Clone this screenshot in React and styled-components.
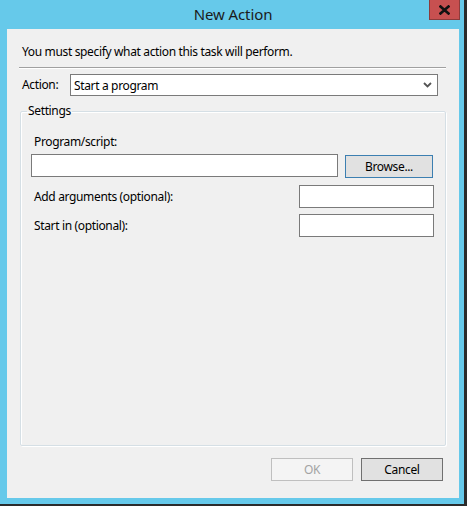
import React from 'react';
import styled, { createGlobalStyle } from 'styled-components';

const GlobalStyle = createGlobalStyle`
  html, body {
    margin: 0;
    padding: 0;
    background: #ffffff;
  }
  body {
    font-family: "Noto Sans", "Liberation Sans", sans-serif;
    font-size: 12px;
    letter-spacing: -0.35px;
    color: #000000;
  }
  * { box-sizing: border-box; }
`;

export default function App() {
  return (
    <>
      <GlobalStyle />
      <Frame>
        <TitleBar>
          <span />
          <Title>New Action</Title>
          <CloseButton aria-label="Close">
            <svg width="11" height="10" viewBox="0 0 11 10">
              <path d="M1.5 1.5 L9.5 8.5 M9.5 1.5 L1.5 8.5" stroke="#111" strokeWidth="2.6" strokeLinecap="square" />
            </svg>
          </CloseButton>
        </TitleBar>

        <Panel>
          <Intro>You must specify what action this task will perform.</Intro>
          <Separator />

          <ActionRow>
            <RowLabel>Action:</RowLabel>
            <Select>
              <span>Start a program</span>
              <svg width="9" height="6" viewBox="0 0 9 6">
                <path d="M1 1 L4.5 4.5 L8 1" stroke="#555" strokeWidth="1.8" fill="none" />
              </svg>
            </Select>
          </ActionRow>

          <Group>
            <Legend>Settings</Legend>
            <GroupBody>
              <FieldLabel>Program/script:</FieldLabel>
              <ProgramRow>
                <TextBox />
                <Button $accent>Browse...</Button>
              </ProgramRow>
              <OptionRow $top={7}>
                <FieldLabel $inline>Add arguments (optional):</FieldLabel>
                <TextBox $width={135} />
              </OptionRow>
              <OptionRow $top={6}>
                <FieldLabel $inline>Start in (optional):</FieldLabel>
                <TextBox $width={135} />
              </OptionRow>
            </GroupBody>
          </Group>

          <Footer>
            <Button $disabled>OK</Button>
            <Button>Cancel</Button>
          </Footer>
        </Panel>
      </Frame>
    </>
  );
}

const Frame = styled.div`
  width: 467px;
  height: 506px;
  display: flex;
  flex-direction: column;
  background: #66c9ea;
  border-right: 3px solid #2b2b2b;
  border-bottom: 2px solid #2b2b2b;
  padding: 0 5px 6px 7px;
`;

const TitleBar = styled.div`
  height: 29px;
  flex: none;
  display: grid;
  grid-template-columns: 1fr auto 1fr;
  align-items: start;
  margin-left: -7px;
  padding-left: 7px;
`;

const Title = styled.div`
  font-size: 15px;
  line-height: 20px;
  padding-top: 4px;
  color: #1b1b1b;
  letter-spacing: -0.1px;
`;

const CloseButton = styled.button`
  justify-self: end;
  width: 31px;
  height: 20px;
  margin-right: -1px;
  padding: 0;
  border: 1px solid #8c3b3b;
  border-top: none;
  background: #c75050;
  display: flex;
  align-items: center;
  justify-content: center;
`;

const Panel = styled.div`
  flex: 1;
  display: flex;
  flex-direction: column;
  background: #f0f0f0;
  padding: 15px 13px 17px 12px;
`;

const Intro = styled.div`
  line-height: 16px;
  margin-left: 3px;
`;

const Separator = styled.div`
  margin-top: 7px;
  height: 2px;
  border-top: 1px solid #a0a0a0;
  border-bottom: 1px solid #ffffff;
`;

const ActionRow = styled.div`
  margin-top: 5px;
  display: flex;
  align-items: center;
  padding-right: 8px;
`;

const RowLabel = styled.span`
  width: 48px;
  margin-left: 3px;
  line-height: 16px;
`;

const Select = styled.div`
  flex: 1;
  height: 22px;
  display: flex;
  align-items: center;
  justify-content: space-between;
  padding: 0 5px 0 3px;
  background: #ffffff;
  border: 1px solid #7a7a7a;
`;

const Group = styled.fieldset`
  flex: 1;
  min-width: 0;
  margin: 7px 0 0 1px;
  padding: 0;
  border: 1px solid #d5dfe5;
  border-radius: 2px;
  box-shadow: inset 1px 1px 0 #ffffff, 1px 1px 0 #ffffff;
`;

const Legend = styled.legend`
  margin-left: 6px;
  padding: 0 1px;
  line-height: 16px;
`;

const GroupBody = styled.div`
  padding: 15px 12px 0 10px;
`;

const FieldLabel = styled.div`
  padding-left: 3px;
  line-height: 16px;
  flex: ${p => (p.$inline ? 1 : 'none')};
`;

const ProgramRow = styled.div`
  margin-top: 4px;
  display: flex;
  align-items: flex-start;
  gap: 7px;
`;

const OptionRow = styled.div`
  margin-top: ${p => p.$top}px;
  margin-right: -1px;
  display: flex;
  align-items: center;
`;

const TextBox = styled.div`
  height: 23px;
  background: #ffffff;
  border: 1px solid #7a7a7a;
  ${p => (p.$width ? `width: ${p.$width}px; flex: none;` : 'flex: 1;')}
`;

const Button = styled.button`
  width: ${p => (p.$accent ? 88 : 82)}px;
  height: 23px;
  margin-top: ${p => (p.$accent ? 1 : 0)}px;
  padding: 0;
  font-family: inherit;
  font-size: 12px;
  letter-spacing: inherit;
  color: ${p => (p.$disabled ? '#a3a3a3' : '#000000')};
  background: ${p => (p.$disabled ? '#f4f4f4' : '#e1e1e1')};
  border: 1px solid ${p => (p.$accent ? '#3c7fb1' : p.$disabled ? '#bfbfbf' : '#707070')};
`;

const Footer = styled.div`
  margin-top: 12px;
  display: flex;
  justify-content: flex-end;
  gap: 8px;
  padding-right: 3px;
`;
